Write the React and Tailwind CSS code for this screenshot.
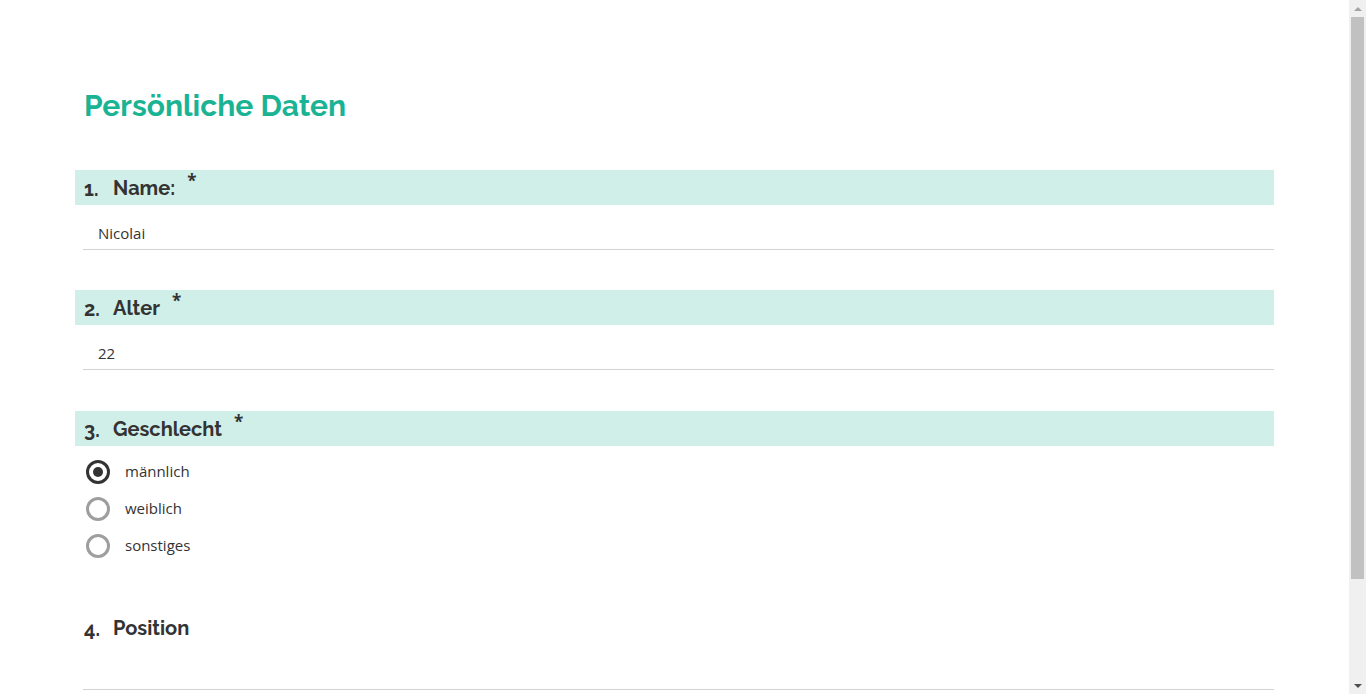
import React from 'react';

const heading = { fontFamily: '"Raleway", Lato, "Open Sans", sans-serif' };
const body = { fontFamily: '"Open Sans", "Noto Sans", sans-serif' };

const QuestionBar = ({ num, label, required = true, plain = false }) => (
  <div
    className={`flex h-[35px] items-center pl-[9px] text-[#333] ${plain ? 'bg-white' : 'bg-[#d1efe9]'}`}
    style={heading}
  >
    <span className="w-[29px] pt-[2px] text-[20px] font-bold">{num}.</span>
    <span className="text-[20px] font-bold">{label}</span>
    {required && (
      <span className="ml-[12px] -mt-[13px] text-[17px] font-bold" style={body}>*</span>
    )}
  </div>
)

const TextAnswer = ({ value }) => (
  <div className="ml-[8px] flex h-[45px] items-center border-b border-[#d3d3d3] pl-[15px] pt-[12px] text-[15px] text-[#333]" style={body}>
    {value}
  </div>
)

const Radio = ({ label, checked }) => (
  <div className="flex h-[37px] items-center pl-[11px]" style={body}>
    <span
      className={`flex h-[24px] w-[24px] items-center justify-center rounded-full border-[3px] ${checked ? 'border-[#333]' : 'border-[#9e9e9e]'}`}
    >
      {checked && <span className="h-[10px] w-[10px] rounded-full bg-[#333]" />}
    </span>
    <span className="ml-[15px] text-[15px] text-[#333]">{label}</span>
  </div>
)

const Scrollbar = () => (
  <div className="flex h-[694px] w-[17px] shrink-0 flex-col items-center bg-[#f0f0f0]">
    <div className="flex h-[17px] items-center justify-center">
      <span className="h-0 w-0 border-x-[4px] border-b-[4px] border-x-transparent border-b-[#a3a3a3]" />
    </div>
    <div className="h-[562px] w-[13px] bg-[#c1c1c1]" />
    <div className="flex-1" />
    <div className="flex h-[17px] items-center justify-center">
      <span className="h-0 w-0 border-x-[4px] border-t-[4px] border-x-transparent border-t-[#505050]" />
    </div>
  </div>
)

export default function App() {
  return (
    <div className="flex h-[694px] overflow-hidden bg-white">
      <div className="flex-1 px-[75px]">
        <h1 className="pl-[9px] pt-[86px] text-[30px] font-bold leading-[40px] text-[#1ab394]" style={heading}>
          Persönliche Daten
        </h1>

        <div className="mt-[44px]">
          <QuestionBar num="1" label="Name:" />
          <TextAnswer value="Nicolai" />
        </div>

        <div className="mt-[40px]">
          <QuestionBar num="2" label="Alter" />
          <TextAnswer value="22" />
        </div>

        <div className="mt-[41px]">
          <QuestionBar num="3" label="Geschlecht" />
          <div className="pt-[7px]">
            <Radio label="männlich" checked />
            <Radio label="weiblich" />
            <Radio label="sonstiges" />
          </div>
        </div>

        <div className="mt-[46px]">
          <QuestionBar num="4" label="Position" required={false} plain />
          <div className="ml-[8px] h-[45px] border-b border-[#d3d3d3]" />
        </div>
      </div>
      <Scrollbar />
    </div>
  )
}
